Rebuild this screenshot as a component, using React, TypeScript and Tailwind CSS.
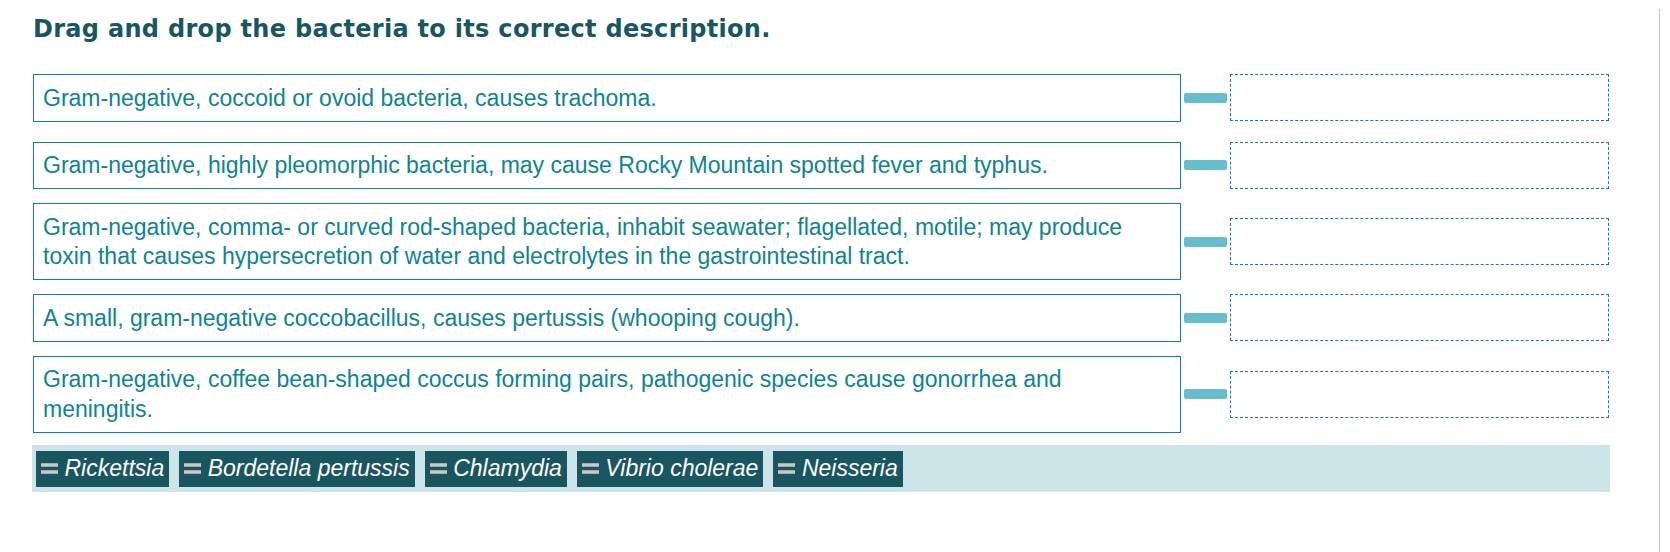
import React from 'react';

interface Row {
  text: string;
  first?: boolean;
}

const rows: Row[] = [
  { text: 'Gram-negative, coccoid or ovoid bacteria, causes trachoma.', first: true },
  { text: 'Gram-negative, highly pleomorphic bacteria, may cause Rocky Mountain spotted fever and typhus.' },
  {
    text: 'Gram-negative, comma- or curved rod-shaped bacteria, inhabit seawater; flagellated, motile; may produce toxin that causes hypersecretion of water and electrolytes in the gastrointestinal tract.',
  },
  { text: 'A small, gram-negative coccobacillus, causes pertussis (whooping cough).' },
  { text: 'Gram-negative, coffee bean-shaped coccus forming pairs, pathogenic species cause gonorrhea and meningitis.' },
];

const chips = ['Rickettsia', 'Bordetella pertussis', 'Chlamydia', 'Vibrio cholerae', 'Neisseria'];

const Grip: React.FC = () => (
  <div className="flex flex-col gap-[2.5px] w-[17px] mr-[6.5px] shrink-0">
    <div className="h-[4px] bg-gradient-to-b from-[#9c9c9c] via-[#d6d6d6] to-[#9c9c9c]" />
    <div className="h-[4px] bg-gradient-to-b from-[#9c9c9c] via-[#d6d6d6] to-[#9c9c9c]" />
  </div>
);

export default function App() {
  return (
    <div className="relative w-[1670px] h-[552px] bg-white overflow-hidden font-['Liberation_Sans',Arial,sans-serif]">
      {/* right edge divider */}
      <div className="absolute left-[1659px] top-[9px] bottom-0 w-px bg-[#c4c4c4]" />

      <div className="w-[1578px] ml-[32px] pt-[15px]">
        <h1 className="ml-[1px] font-['DejaVu_Sans',Verdana,sans-serif] text-[24px] leading-[28px] font-bold tracking-[0.3px] text-[#175762]">
          Drag and drop the bacteria to its correct description.
        </h1>

        <div className="mt-[31px] flex flex-col gap-[14px]">
          {rows.map((row, i) => (
            <div key={i} className={`ml-px flex items-center ${row.first ? 'mb-[6px]' : ''}`}>
              <div className="w-[1148px] border border-[#0b8593] px-[9px] pt-[8.5px] pb-[7.5px] text-[23px] leading-[29.5px] text-[#0b8593]">
                {row.text}
              </div>
              <div className="mx-[3px] w-[43px] h-[10px] rounded-[2px] bg-[#66bdcc]" />
              <div className="w-[379px] h-[47px] border border-dashed border-[#0b8593]" />
            </div>
          ))}
        </div>

        <div className="mt-[12px] flex gap-[10px] bg-[#cde5e9] pl-[4px] pt-[6px] pb-[5px]">
          {chips.map((c) => (
            <div
              key={c}
              className="h-[36px] flex items-center bg-[#1a5660] pl-[5px] pr-[5px] text-[23px] italic text-white"
            >
              <Grip />
              <span>{c}</span>
            </div>
          ))}
        </div>
      </div>
    </div>
  );
}
